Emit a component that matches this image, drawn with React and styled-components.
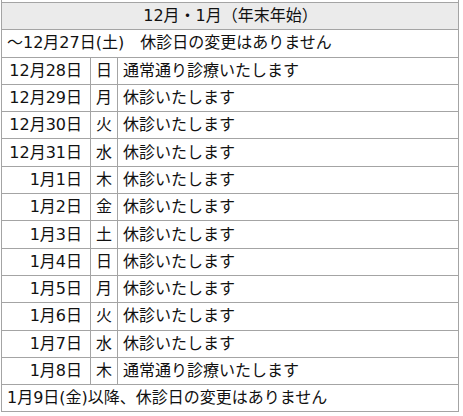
import React from 'react';
import styled, { createGlobalStyle } from 'styled-components';

const GlobalStyle = createGlobalStyle`
  html, body {
    margin: 0;
    padding: 0;
    background: #ffffff;
  }
  body {
    font-family: "DejaVu Sans", "Noto Sans CJK JP", sans-serif;
    color: #111111;
    overflow: hidden;
  }
`;

const Wrap = styled.div`
  padding: 0 4px 0 1px;
`;

const Table = styled.table`
  width: 458px;
  border-collapse: collapse;
  font-size: 16px;
  line-height: 1;
`;

const Cell = styled.td`
  border: 1px solid #a4a4a4;
  height: 26.3px;
  padding: 0 ${p => (p.$align === 'right' ? '8px' : '4px')} 0 ${p => (p.$align === 'right' ? '0' : '5px')};
  text-align: ${p => p.$align || 'left'};
  white-space: nowrap;
  vertical-align: middle;
`;

const SpacerCell = styled(Cell)`
  height: 2px;
  padding: 0;
  border-top: none;
  font-size: 0;
  line-height: 0;
`;

const HeadCell = styled(Cell)`
  background: #ebebeb;
  text-align: center;
`;

const rows = [
  ['12月28日', '日', '通常通り診療いたします'],
  ['12月29日', '月', '休診いたします'],
  ['12月30日', '火', '休診いたします'],
  ['12月31日', '水', '休診いたします'],
  ['1月1日', '木', '休診いたします'],
  ['1月2日', '金', '休診いたします'],
  ['1月3日', '土', '休診いたします'],
  ['1月4日', '日', '休診いたします'],
  ['1月5日', '月', '休診いたします'],
  ['1月6日', '火', '休診いたします'],
  ['1月7日', '水', '休診いたします'],
  ['1月8日', '木', '通常通り診療いたします'],
];

export default function App() {
  return (
    <Wrap>
      <GlobalStyle />
      <Table>
        <colgroup>
          <col style={{ width: 89 }} />
          <col style={{ width: 27 }} />
          <col />
        </colgroup>
        <tbody>
          <tr>
            <SpacerCell colSpan={3} />
          </tr>
          <tr>
            <HeadCell colSpan={3}>12月・1月（年末年始）</HeadCell>
          </tr>
          <tr>
            <Cell colSpan={3}>～12月27日(土)　休診日の変更はありません</Cell>
          </tr>
          {rows.map(([date, day, note]) => (
            <tr key={date}>
              <Cell $align="right">{date}</Cell>
              <Cell $align="center" style={{ padding: 0 }}>{day}</Cell>
              <Cell>{note}</Cell>
            </tr>
          ))}
          <tr>
            <Cell colSpan={3}>1月9日(金)以降、休診日の変更はありません</Cell>
          </tr>
        </tbody>
      </Table>
    </Wrap>
  );
}
